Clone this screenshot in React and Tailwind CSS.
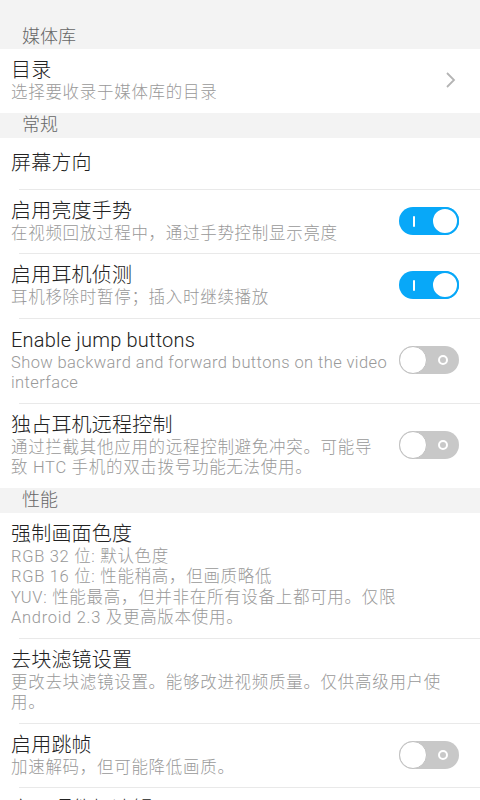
import React from "react";

const font = { fontFamily: '"Roboto", "Noto Sans CJK SC", sans-serif' };

function Toggle({ on }) {
  if (on) {
    return (
      <div className="relative w-[60px] h-[28px] rounded-full bg-[#08a8f8] shrink-0">
        <div className="absolute left-[14px] top-[9px] w-[2px] h-[11px] bg-white rounded-sm" />
        <div className="absolute right-0 top-0 w-[28px] h-[28px] rounded-full bg-white border-2 border-[#08a8f8]" />
      </div>
    );
  }
  return (
    <div className="relative w-[60px] h-[28px] rounded-full bg-[#c8c8c8] shrink-0">
      <div className="absolute right-[11px] top-[9px] w-[10px] h-[10px] rounded-full border-2 border-white" />
      <div className="absolute left-0 top-0 w-[28px] h-[28px] rounded-full bg-white border border-[#c0c0c0]" />
    </div>
  );
}

function Header({ children }) {
  return (
    <div className="bg-[#f3f3f3] h-[25px] flex items-center pl-[22px] text-[18px] leading-none text-[#666] font-light">
      {children}
    </div>
  );
}

function Row({ title, sub, right, divider = true, single, latin }) {
  return (
    <div className="relative bg-white">
      <div className={"flex items-center pl-[11px] pr-[21px] " + (single ? "h-[51px]" : "pt-[8px] pb-[9px]")}>
        <div className="flex-1 min-w-0 pr-[9px]">
          <div className="text-[20px] leading-[26px] text-[#222] font-light tracking-[0.2px]">{title}</div>
          {sub && (
            <div
              className={
                "text-[16.5px] leading-[20.5px] text-[#999] font-light whitespace-pre-line " +
                (latin ? "tracking-[0.4px]" : "tracking-[0.7px]")
              }
            >
              {sub}
            </div>
          )}
        </div>
        {right}
      </div>
      {divider && <div className="ml-[19px] h-px bg-[#e9e9e9]" />}
    </div>
  );
}

function Chevron() {
  return (
    <svg width="14" height="18" viewBox="0 0 14 18" className="shrink-0 mr-[1px]">
      <path d="M3 2 L10 9 L3 16" fill="none" stroke="#b4b4b4" strokeWidth="1.8" />
    </svg>
  );
}

export default function App() {
  return (
    <div style={font} className="w-[480px] h-[800px] overflow-hidden bg-[#f3f3f3]">
      <div className="h-[24px] bg-[#f3f3f3]" />
      <Header>媒体库</Header>
      <Row title="目录" sub="选择要收录于媒体库的目录" right={<Chevron />} divider={false} />
      <Header>常规</Header>
      <Row title="屏幕方向" single />
      <Row title="启用亮度手势" sub="在视频回放过程中，通过手势控制显示亮度" right={<Toggle on />} />
      <Row title="启用耳机侦测" sub="耳机移除时暂停；插入时继续播放" right={<Toggle on />} />
      <Row title="Enable jump buttons" latin sub="Show backward and forward buttons on the video interface" right={<Toggle />} />
      <Row title="独占耳机远程控制" sub={"通过拦截其他应用的远程控制避免冲突。可能导\n致 HTC 手机的双击拨号功能无法使用。"} right={<Toggle />} divider={false} />
      <Header>性能</Header>
      <Row
        title="强制画面色度"
        sub={"RGB 32 位: 默认色度\nRGB 16 位: 性能稍高，但画质略低\nYUV: 性能最高，但并非在所有设备上都可用。仅限\nAndroid 2.3 及更高版本使用。"}
      />
      <Row title="去块滤镜设置" sub={"更改去块滤镜设置。能够改进视频质量。仅供高级用户使\n用。"} />
      <Row title="启用跳帧" sub="加速解码，但可能降低画质。" right={<Toggle />} />
      <Row title="启用硬件加速解码" sub="在支持的设备上使用硬件解码" />
    </div>
  );
}
